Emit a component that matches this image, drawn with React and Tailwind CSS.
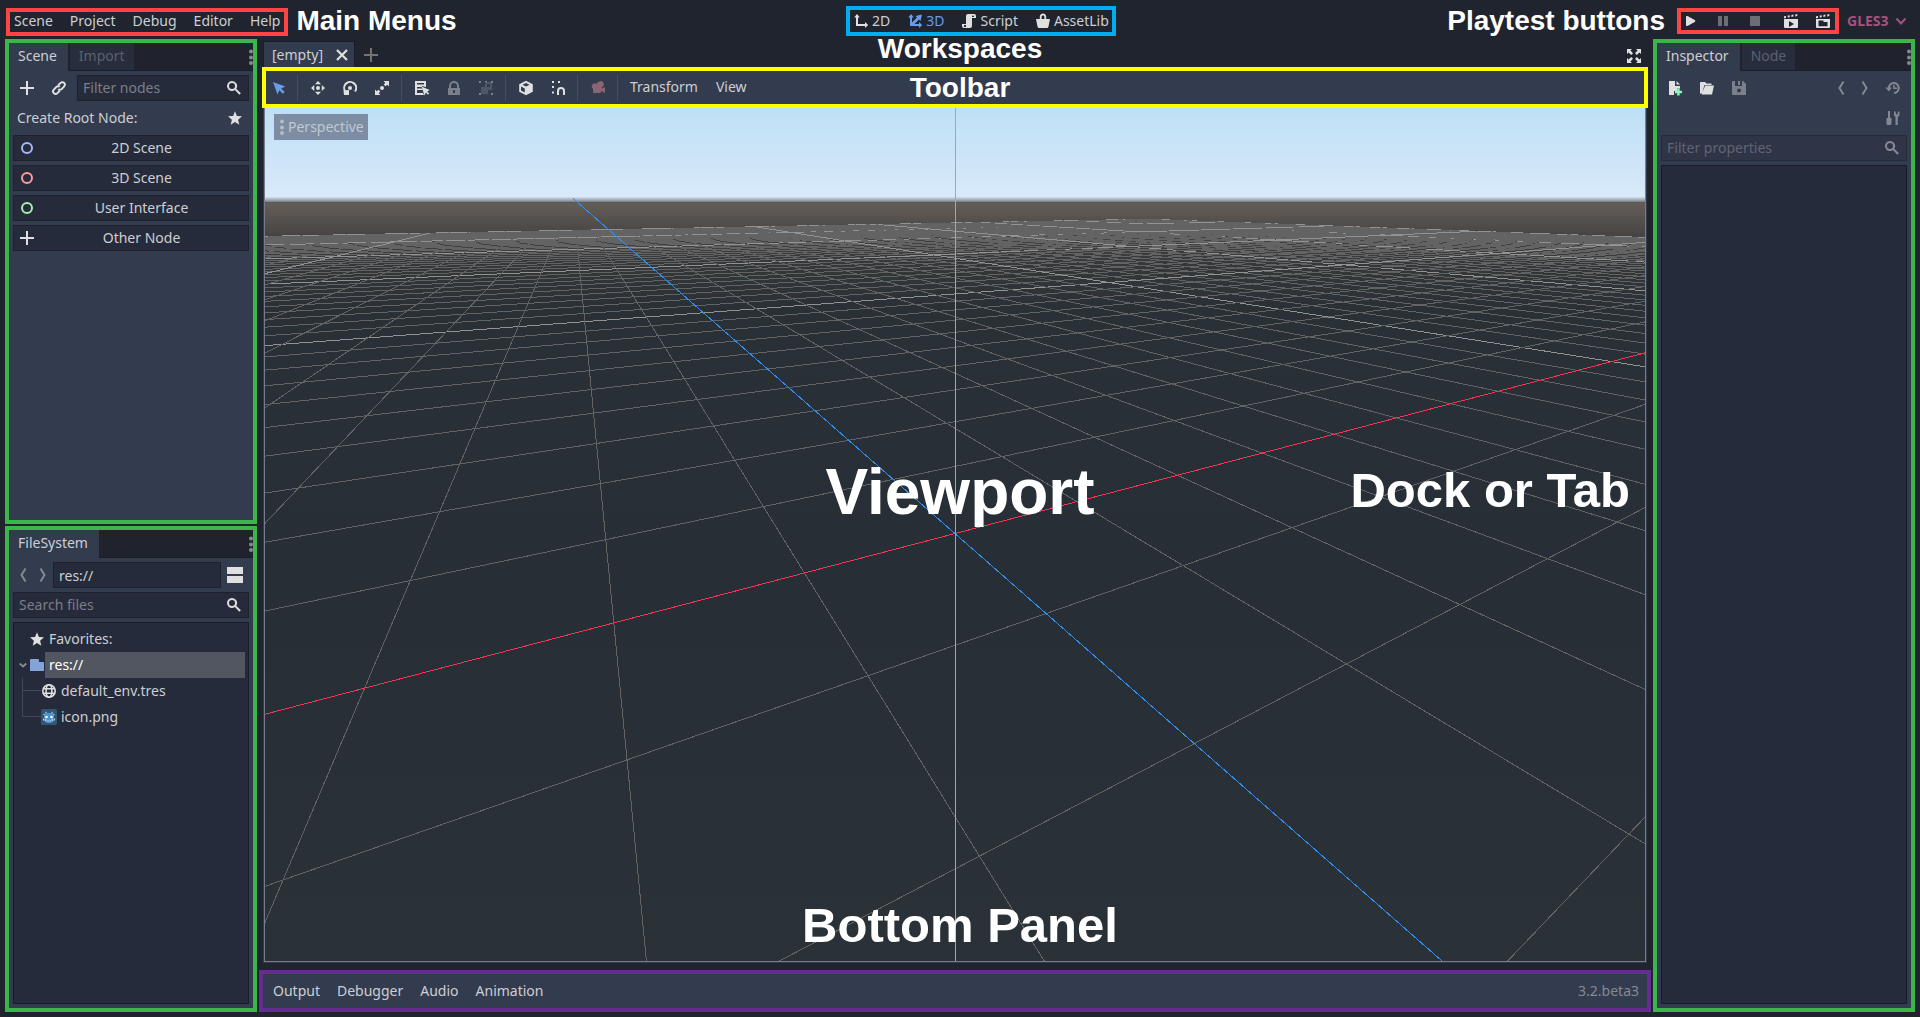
import React from "react";

/* ---------- icons, all on a 16px grid ---------- */

function Icon({ children, className = "text-[#e0e0e0]", label }) {
  return (
    <svg viewBox="0 0 16 16" className={`size-4 shrink-0 ${className}`} fill="currentColor" aria-hidden={label ? undefined : true}>
      {children}
    </svg>
  );
}

const Plus = (p) => (
  <Icon {...p}>
    <path d="M7 1h2v6h6v2H9v6H7V9H1V7h6z" />
  </Icon>
);
const Search = (p) => (
  <Icon {...p}>
    <path d="M6 1a5 5 0 1 0 2.9 9.1l4.400 4.600 1.600-1.500-4.600-4.500A5 5 0 0 0 6 1zm0 2a3 3 0 1 1 0 6 3 3 0 0 1 0-6z" />
  </Icon>
);
const Star = (p) => (
  <Icon {...p}>
    <path d="M8 1.200 9.900 5.900l5.100.4-3.900 3.400 1.200 5L8 12l-4.300 2.700 1.200-5L1 6.300l5.100-.4z" />
  </Icon>
);
const LinkIcon = (p) => (
  <Icon {...p}>
    <g fill="none" stroke="currentColor" strokeWidth="2">
      <path d="M7.200 5.300 9.600 2.900a2.500 2.500 0 0 1 3.600 3.500l-2.600 2.700c-1 1-2.500 1-3.300.1" />
      <path d="M8.800 10.700 6.400 13.100a2.500 2.500 0 0 1-3.600-3.500l2.600-2.700c1-1 2.500-1 3.300-.1" />
    </g>
  </Icon>
);
const Ring = (p) => (
  <Icon {...p}>
    <circle cx="8" cy="8" r="5" fill="none" stroke="currentColor" strokeWidth="2" />
  </Icon>
);
const Dots = (p) => (
  <Icon {...p}>
    <circle cx="8" cy="2.500" r="2" />
    <circle cx="8" cy="8.500" r="2" />
    <circle cx="8" cy="14" r="2" />
  </Icon>
);
const ChevronLeft = (p) => (
  <Icon {...p}>
    <path d="M10.500 1.500 6.500 8l4 6.500" fill="none" stroke="currentColor" strokeWidth="2" />
  </Icon>
);
const ChevronRight = (p) => (
  <Icon {...p}>
    <path d="M5.500 1.500 9.500 8l-4 6.500" fill="none" stroke="currentColor" strokeWidth="2" />
  </Icon>
);
const ChevronDown = (p) => (
  <Icon {...p}>
    <path d="m3.500 5.500 4.500 5 4.500-5" fill="none" stroke="currentColor" strokeWidth="2" />
  </Icon>
);
const FoldArrow = (p) => (
  <Icon {...p}>
    <path d="m4.700 6.500 3.300 3 3.300-3" fill="none" stroke="currentColor" strokeWidth="2" />
  </Icon>
);
const Close = (p) => (
  <Icon {...p}>
    <path d="m3 3 10 10M13 3 3 13" fill="none" stroke="currentColor" strokeWidth="2.200" />
  </Icon>
);
const SplitMode = (p) => (
  <Icon {...p}>
    <path d="M0 0h16v7H0zM0 9h16v7H0z" />
  </Icon>
);
const Folder = (p) => (
  <Icon {...p}>
    <path d="M2 2a1 1 0 0 0-1 1v11h14V6a1 1 0 0 0-1-1h-4V3a1 1 0 0 0-1-1z" />
  </Icon>
);
const Globe = (p) => (
  <Icon {...p}>
    <g fill="none" stroke="currentColor" strokeWidth="1.600">
      <circle cx="8" cy="8" r="6.200" />
      <ellipse cx="8" cy="8" rx="2.900" ry="6.200" />
      <path d="M2 5.800h12M2 10.200h12" strokeWidth="1.400" />
    </g>
  </Icon>
);
const Robot = (p) => (
  <Icon {...p}>
    <rect width="16" height="16" rx="1.500" fill="#35546f" />
    <path d="M3 5.500 4.500 3l2 1h3l2-1L13 5.500V11c0 2-2 3-5 3s-5-1-5-3z" fill="#4a93cc" />
    <path d="M3 5v1M5 2.800v1M11 2.800v1M13 5v1M2.500 9.500v2M13.500 9.500v2" stroke="#b9dcf5" strokeWidth="1" />
    <circle cx="5.500" cy="8" r="1.300" fill="#fff" />
    <circle cx="10.500" cy="8" r="1.300" fill="#fff" />
    <path d="M4 11h1.500M6.500 12h1M8.500 12h1M10.500 11H12" stroke="#fff" strokeWidth="1" />
  </Icon>
);
const Axes2D = (p) => (
  <Icon {...p}>
    <path d="M4 1 1.200 4.500H3V13h9v2l3.200-3L12 9v2H5V4.500h1.800z" />
  </Icon>
);
const Axes3D = (p) => (
  <Icon {...p}>
    <path d="M4 1 1.200 4.500H3V13h9v2l3.200-3L12 9v2H7.400L12 6.400l1.500 1.600L15 1.500 8.500 3l1.600 1.500L5 9.600V4.500h1.800z" />
  </Icon>
);
const Script = (p) => (
  <Icon {...p}>
    <path d="M7 1a2 2 0 0 0-2 2v8H1v2a2 2 0 0 0 2 2h6a2 2 0 0 0 2-2V5h4V3a2 2 0 0 0-2-2zm5 1.500a.9.9 0 0 1 .9.900V4H11v-.600c0-.500.500-.900 1-.900zM3 12h2v1.500a.7.7 0 0 1-.700.500H3.500a.6.6 0 0 1-.500-.500z" />
  </Icon>
);
const Bag = (p) => (
  <Icon {...p}>
    <path d="M8 .500A3.200 3.200 0 0 0 4.800 4v2H1l1.600 8a1.400 1.400 0 0 0 1.400 1h8a1.400 1.400 0 0 0 1.400-1L15 6h-3.800V4A3.200 3.200 0 0 0 8 .500zM8 2.400c.9 0 1.400.7 1.400 1.600v2H6.600V4c0-.9.500-1.600 1.400-1.600z" />
  </Icon>
);
const Play = (p) => (
  <Icon {...p}>
    <path d="M3 4a1 1 0 0 1 1.500-.9l7.200 4a1 1 0 0 1 0 1.800l-7.200 4A1 1 0 0 1 3 12z" />
  </Icon>
);
const Pause = (p) => (
  <Icon {...p}>
    <path d="M3 3h4v10H3zM9 3h4v10H9z" />
  </Icon>
);
const Stop = (p) => (
  <Icon {...p}>
    <rect x="3" y="3" width="10" height="10" rx=".8" />
  </Icon>
);
const Clapper = ({ kind, ...p }) => (
  <Icon {...p}>
    <path d="M1 3.200 3 2.900v2L1 5.200zM4.700 2.600l2-.400v2l-2 .400zM8.400 2l2-.400v2l-2 .400zM12.300 1.400l2-.400v2l-2 .400z" />
    {kind === "play" ? (
      <path fillRule="evenodd" d="M1 6h14v8a1 1 0 0 1-1 1H2a1 1 0 0 1-1-1zm5 2v6l5-3z" />
    ) : (
      <path fillRule="evenodd" d="M1 6h14v8a1 1 0 0 1-1 1H2a1 1 0 0 1-1-1zm2.500 1.500V13.200h9V9h-4V7.500z" />
    )}
  </Icon>
);
const Expand = (p) => (
  <Icon {...p}>
    <path d="M1 1h5L4.400 2.600 7 5.200 5.200 7 2.600 4.400 1 6zM15 1v5l-1.600-1.600L10.800 7 9 5.200l2.600-2.600L10 1zM1 15v-5l1.600 1.600L5.200 9 7 10.800l-2.600 2.600L6 15zM15 15h-5l1.600-1.600L9 10.800 10.800 9l2.600 2.600L15 10z" />
  </Icon>
);
const Cursor = (p) => (
  <Icon {...p}>
    <path d="m2 2 4.500 12.500 1.800-4.200 3.500 3.500 1.900-1.900-3.500-3.500 4.100-1.800z" />
  </Icon>
);
const Move = (p) => (
  <Icon {...p}>
    <circle cx="8" cy="8" r="2" />
    <path d="m8 1 3 3.200H5zM8 15l3-3.200H5zM1 8l3.200-3v6zM15 8l-3.200-3v6z" />
  </Icon>
);
const Rotate = (p) => (
  <Icon {...p}>
    <circle cx="8" cy="8" r="2" />
    <path d="M3.700 12A6 6 0 1 1 13 11.500" fill="none" stroke="currentColor" strokeWidth="2" />
    <path d="M1.500 10.500 7 10v5H2z" />
  </Icon>
);
const Scale = (p) => (
  <Icon {...p}>
    <circle cx="8" cy="8" r="2" />
    <path d="M9.500 1H15v5.500l-1.800-1.800-1.700 1.600-1.800-1.800 1.600-1.700zM6.500 15H1V9.500l1.800 1.800 1.700-1.600 1.800 1.800-1.600 1.700z" />
  </Icon>
);
const ListSelect = (p) => (
  <Icon {...p}>
    <path fillRule="evenodd" d="M1 1h11v6L8 6v1H3v1.500h5.500V10H3v3h6l1 2H1zm2 2v1.500h7V3z" />
    <path d="m7.500 6.500 3 9 1.500-3 2 2.200 1.200-1.200-2-2 2.500-1.500z" />
  </Icon>
);
const Lock = (p) => (
  <Icon {...p}>
    <path fillRule="evenodd" d="M8 1a5 5 0 0 0-5 5v2H2v7h12V8h-1V6a5 5 0 0 0-5-5zm0 2a3 3 0 0 1 3 3v2H5V6a3 3 0 0 1 3-3zM7 10h2v3H7z" />
  </Icon>
);
const Group = (p) => (
  <Icon {...p}>
    <path fillRule="evenodd" d="M7 2h7v8h-4v4H3V7h4zm2 2v3h3V4z" opacity=".4" />
    <path d="M1 1h2v2H1zM13 1h2v2h-2zM1 13h2v2H1zM13 13h2v2h-2zM7 1h2v1H7z" />
  </Icon>
);
const Cube = (p) => (
  <Icon {...p}>
    <path fillRule="evenodd" d="m8 .800 6.800 3.500v7.400L8 15.200l-6.800-3.500V4.300zM8 3 4.500 4.800 8 6.600l3.500-1.800zM3 6.500v4l3.800 2v-4z" />
  </Icon>
);
const Snap = (p) => (
  <Icon {...p}>
    <path d="M2 1h2v2H2zM8 1h2v2H8zM2 6h2v2H2zM2 11.500h2v2H2z" />
    <path d="M8 15v-4a3 3 0 0 1 6 0v4" fill="none" stroke="currentColor" strokeWidth="2" />
  </Icon>
);
const Camera = (p) => (
  <Icon {...p}>
    <path d="M9.500 1.500A3 3 0 0 0 6.600 4 3 3 0 1 0 3 8.800V12a1 1 0 0 0 1 1h6a1 1 0 0 0 1-1v-1l4 2V7l-3 1.500V7a3 3 0 0 0-2.500-5.500z" />
  </Icon>
);
const NewFile = (p) => (
  <Icon {...p}>
    <path d="M2 1h6v5h5v2.500h-3V11H7v4H2zM9.500 1 13 4.600H9.500z" />
    <path d="M10.200 8.600h2.400v2.200H15v2.400h-2.400v2.400h-2.400v-2.400H8v-2.400h2.200z" fill="#84ffb1" />
  </Icon>
);
const OpenFolder = (p) => (
  <Icon {...p}>
    <path d="M1 13V3a1 1 0 0 1 1-1h4l1.500 1.500h5V5H5.500L3 13.500zM6.200 5.500H15L13 14.500H2.500z" />
    <path d="M1.500 13.500V2.500" stroke="currentColor" />
  </Icon>
);
const Save = (p) => (
  <Icon {...p}>
    <path fillRule="evenodd" d="M1 2a1 1 0 0 1 1-1h2v5h7V1h1l3 3v10a1 1 0 0 1-1 1H2a1 1 0 0 1-1-1zm7 6.500a2 2 0 1 0 0 4 2 2 0 0 0 0-4zM7 1h2v4H7z" />
  </Icon>
);
const History = (p) => (
  <Icon {...p}>
    <path d="M3.800 8.500A5 5 0 1 1 9 13" fill="none" stroke="currentColor" strokeWidth="2" />
    <path d="M.500 7.500h6.500L3.800 11.500zM8.200 5h1.600v2.500H12v1.600H8.200z" />
  </Icon>
);
const Tools = (p) => (
  <Icon {...p}>
    <path d="M3 1h2v7h1.500v5.500a1.500 1.500 0 0 1-1.500 1.500H3a1.500 1.500 0 0 1-1.500-1.500V8H3zM9 1v3.500A3 3 0 0 0 10.500 7v8h2.300V7A3 3 0 0 0 14.500 4.500V1l-1.700 1v2.200h-2V2z" />
  </Icon>
);

/* ---------- shared controls ---------- */

function IconButton({ label, className = "w-7", children }) {
  return (
    <button aria-label={label} className={`flex h-[26px] shrink-0 items-center justify-center ${className}`}>
      {children}
    </button>
  );
}

function Tab({ active, children }) {
  return (
    <button
      role="tab"
      aria-selected={!!active}
      className={
        active
          ? "h-7 bg-[#333b4f] pb-0.5 pl-[9px] pr-[11px] text-[#cdcfd2]"
          : "ml-0.5 h-7 border-b border-[#1b1e29] bg-[#282d3d] px-[9px] pb-0.5 text-[#5b606e]"
      }
    >
      {children}
    </button>
  );
}

function Dock({ tabs, children }) {
  return (
    <section className="flex min-h-0 min-w-0 flex-col border-4 border-[#3cb64a] bg-[#333b4f]">
      <div role="tablist" className="flex h-7 shrink-0 overflow-hidden bg-[#20232e]">
        {tabs.map((name, i) => (
          <Tab key={name} active={i === 0}>
            {name}
          </Tab>
        ))}
        <div className="flex flex-1 items-center justify-end border-b border-[#1b1e29]">
          <button aria-label="Dock options" className="-mr-1.5">
            <Dots className="text-[#868890]" />
          </button>
        </div>
      </div>
      <div className="flex min-h-0 flex-1 flex-col gap-1 p-1">{children}</div>
    </section>
  );
}

function SearchField({ label, muted }) {
  return (
    <label
      className={`flex h-[26px] min-w-0 flex-1 items-center border pl-[5px] pr-1.5 ${
        muted ? "border-[#262b3a] bg-[#2f3547]" : "border-[#1f222e] bg-[#262b3b]"
      }`}
    >
      <input
        aria-label={label}
        placeholder={label}
        className={`w-full min-w-0 bg-transparent outline-none ${
          muted ? "placeholder:text-[#5f6474]" : "placeholder:text-[#7b7e89]"
        }`}
      />
      <Search className={muted ? "text-[#888b94]" : "text-[#dcdcde]"} />
    </label>
  );
}

function RootButton({ icon, children }) {
  return (
    <button className="flex h-[26px] items-center border border-[#1f222e] bg-[#262b3b] pl-[5px]">
      {icon}
      <span className="flex-1 text-center">{children}</span>
    </button>
  );
}

/* ---------- 3D viewport ---------- */

const FOCAL = 614;
const EYE = [-1.6829, 1.9177, 3.0806];
const RIGHT = [0.8776, 0, 0.4794];
const UP = [0.2298, 0.8776, -0.4207];
const FORWARD = [0.4207, -0.4794, -0.7702];
const NEAR = 0.1;

const dot = (a, b) => a[0] * b[0] + a[1] * b[1] + a[2] * b[2];

function toCamera(p) {
  const d = [p[0] - EYE[0], p[1] - EYE[1], p[2] - EYE[2]];
  return [dot(d, RIGHT), dot(d, UP), dot(d, FORWARD)];
}

function project(from, to) {
  let a = toCamera(from);
  let b = toCamera(to);
  if (a[2] < NEAR && b[2] < NEAR) return "";
  const cut = (p, q) => {
    const t = (NEAR - p[2]) / (q[2] - p[2]);
    return [p[0] + t * (q[0] - p[0]), p[1] + t * (q[1] - p[1]), NEAR];
  };
  if (a[2] < NEAR) a = cut(a, b);
  if (b[2] < NEAR) b = cut(b, a);
  const s = (p) => `${((FOCAL * p[0]) / p[2]).toFixed(1)} ${((-FOCAL * p[1]) / p[2]).toFixed(1)}`;
  return `M${s(a)}L${s(b)}`;
}

/* Grid lines from the far edge to the near one, every tenth line brighter. */
const SIZE = 50;
const gridLines = [];
for (let i = SIZE; i >= -SIZE; i--) {
  if (i === 0) continue;
  gridLines.push({
    d: project([i, 0, -SIZE], [i, 0, SIZE]) + project([-SIZE, 0, -i], [SIZE, 0, -i]),
    color: i % 10 === 0 ? "#929292" : "#636363",
  });
}
const axisX = project([-4000, 0, 0], [4000, 0, 0]);
const axisZ = project([0, 0, -4000], [0, 0, 4000]);

function Scene3D() {
  return (
    <svg className="block h-full w-full" aria-label="3D grid">
      <defs>
        <linearGradient id="sky" gradientUnits="userSpaceOnUse" x1="0" y1="-430" x2="0" y2="-331">
          <stop offset="0" stopColor="#bcdff4" />
          <stop offset=".3" stopColor="#c6e3f7" />
          <stop offset=".6" stopColor="#cfe4f8" />
          <stop offset=".94" stopColor="#d8eafa" />
          <stop offset="1" stopColor="#75757a" />
        </linearGradient>
        <linearGradient id="ground" gradientUnits="userSpaceOnUse" x1="0" y1="-331" x2="0" y2="430">
          <stop offset="0" stopColor="#655e58" />
          <stop offset=".045" stopColor="#454342" />
          <stop offset=".08" stopColor="#34383a" />
          <stop offset=".14" stopColor="#293036" />
          <stop offset=".5" stopColor="#272e36" />
          <stop offset="1" stopColor="#2a3137" />
        </linearGradient>
      </defs>
      <svg x="50%" y="50%" overflow="visible">
        <g transform="translate(0 -1)">
          <rect x="-4000" y="-2000" width="8000" height="1669" fill="url(#sky)" />
          <rect x="-4000" y="-331" width="8000" height="3000" fill="url(#ground)" />
          <g fill="none" strokeWidth="1" shapeRendering="crispEdges">
            {gridLines.map((line, i) => (
              <path key={i} d={line.d} stroke={line.color} />
            ))}
            <path d={axisX} stroke="#f53352" />
            <path d={axisZ} stroke="#2d8eee" />
            <path d="M.5-2000V2000" stroke="#87d603" />
          </g>
        </g>
      </svg>
    </svg>
  );
}

/* ---------- regions ---------- */

const CALLOUT = "font-['Liberation_Sans',Arial,sans-serif] font-bold leading-none text-white whitespace-nowrap";

function Header() {
  return (
    <header className="flex h-[39px] shrink-0 items-start pl-1.5 pr-[11px]">
      <nav className="mt-2 flex h-7 items-center gap-[17px] border-4 border-[#ff4444] px-1 pb-0.5">
        {["Scene", "Project", "Debug", "Editor", "Help"].map((m) => (
          <button key={m}>{m}</button>
        ))}
      </nav>
      <span className={`ml-2 mt-[7px] text-[28px] ${CALLOUT}`}>Main Menus</span>

      <div className="flex-1" />
      <nav className="ml-[58px] mt-1.5 flex h-[30px] items-center gap-[17px] border-4 border-[#00adf0] px-[3px]">
        {[
          ["2D", Axes2D],
          ["3D", Axes3D],
          ["Script", Script],
          ["AssetLib", Bag],
        ].map(([name, Glyph]) => (
          <button key={name} className={`flex items-center gap-[3px] ${name === "3D" ? "text-[#699ce8]" : ""}`}>
            <Glyph className={name === "3D" ? "text-[#699ce8]" : "text-[#e0e0e0]"} />
            {name}
          </button>
        ))}
      </nav>
      <div className="flex-1" />

      <span className={`mr-3 mt-[7px] text-[28px] ${CALLOUT}`}>Playtest buttons</span>
      <div className="mt-2 flex h-[26px] items-center gap-4 border-4 border-[#ff4444] pl-0.5 pr-1">
        <button aria-label="Play">
          <Play />
        </button>
        <button aria-label="Pause">
          <Pause className="text-[#6c6e75]" />
        </button>
        <button aria-label="Stop">
          <Stop className="text-[#6c6e75]" />
        </button>
        <button aria-label="Play scene" className="ml-1">
          <Clapper kind="play" />
        </button>
        <button aria-label="Play custom scene">
          <Clapper kind="folder" />
        </button>
      </div>
      <div className="mt-2 flex h-[26px] items-center pl-2 text-[#a4527f]">
        <select aria-label="Renderer" className="mr-1 appearance-none bg-transparent font-bold outline-none">
          <option>GLES3</option>
        </select>
        <ChevronDown className="text-[#a4527f]" />
      </div>
    </header>
  );
}

function ScenePanel() {
  return (
    <Dock tabs={["Scene", "Import"]}>
      <div className="flex gap-1">
        <IconButton label="Add node">
          <Plus />
        </IconButton>
        <IconButton label="Instance scene">
          <LinkIcon />
        </IconButton>
        <SearchField label="Filter nodes" />
      </div>
      <div className="flex h-[26px] items-center justify-between pl-1 pr-1.5">
        <span>Create Root Node:</span>
        <button aria-label="Favorite nodes">
          <Star />
        </button>
      </div>
      <RootButton icon={<Ring className="text-[#a5b7f3]" />}>2D Scene</RootButton>
      <RootButton icon={<Ring className="text-[#fc9c9c]" />}>3D Scene</RootButton>
      <RootButton icon={<Ring className="text-[#a5efac]" />}>User Interface</RootButton>
      <RootButton icon={<Plus />}>Other Node</RootButton>
    </Dock>
  );
}

function FilePanel() {
  return (
    <Dock tabs={["FileSystem"]}>
      <div className="flex">
        <IconButton label="Back" className="w-5">
          <ChevronLeft className="text-[#858890]" />
        </IconButton>
        <IconButton label="Forward" className="w-5">
          <ChevronRight className="text-[#858890]" />
        </IconButton>
        <input
          aria-label="Path"
          defaultValue="res://"
          className="h-[26px] min-w-0 flex-1 border border-[#1f222e] bg-[#262b3b] px-[5px] outline-none"
        />
        <IconButton label="Toggle split mode">
          <SplitMode />
        </IconButton>
      </div>
      <div className="flex">
        <SearchField label="Search files" />
      </div>
      <ul className="min-h-0 flex-1 border border-[#1a1d29] bg-[#262b3b] p-[3px]">
        <li className="flex h-[26px] items-center gap-1 pl-3">
          <Star />
          <span>Favorites:</span>
        </li>
        <li>
          <div className="flex h-[26px] items-center">
            <FoldArrow className="-ml-0.5 -mr-0.5 text-[#858890]" />
            <Folder className="text-[#84a3d6]" />
            <span className="flex h-[26px] flex-1 items-center bg-[#525660] pl-1 text-white">res://</span>
          </div>
          <ul className="ml-[5px]">
            {[
              ["default_env.tres", <Globe key="i" />],
              ["icon.png", <Robot key="i" />],
            ].map(([name, icon]) => (
              <li key={name} className="group flex h-[26px] items-center">
                <span className="flex h-full w-[19px] flex-col">
                  <span className="h-[13px] border-b border-l border-[#42475a]" />
                  <span className="flex-1 border-l border-[#42475a] group-last:border-transparent" />
                </span>
                {icon}
                <span className="ml-1">{name}</span>
              </li>
            ))}
          </ul>
        </li>
      </ul>
    </Dock>
  );
}

function Separator() {
  return <span className="ml-px mr-0.5 h-[26px] w-px bg-[#474e61]" />;
}

function Toolbar() {
  return (
    <div role="toolbar" className="relative z-10 mx-[5px] flex h-[41px] shrink-0 items-center gap-1 border-4 border-[#ffff00] bg-[#333b4f]">
      <IconButton label="Select" className="w-[26px]">
        <Cursor className="text-[#699ce8]" />
      </IconButton>
      <Separator />
      <IconButton label="Move"><Move /></IconButton>
      <IconButton label="Rotate"><Rotate /></IconButton>
      <IconButton label="Scale"><Scale /></IconButton>
      <Separator />
      <IconButton label="List select"><ListSelect /></IconButton>
      <IconButton label="Lock"><Lock className="text-[#7c808b]" /></IconButton>
      <IconButton label="Group"><Group className="text-[#7c808b]" /></IconButton>
      <Separator />
      <IconButton label="Local space"><Cube /></IconButton>
      <IconButton label="Snap"><Snap /></IconButton>
      <Separator />
      <IconButton label="Override camera"><Camera className="text-[#8a6470]" /></IconButton>
      <Separator />
      <button className="pb-0.5 pl-1.5 pr-2">Transform</button>
      <button className="px-1.5 pb-0.5">View</button>
    </div>
  );
}

function Center() {
  return (
    <main className="flex min-h-0 min-w-0 flex-1 flex-col">
      <div role="tablist" className="flex h-7 shrink-0 items-end pl-1.5 pr-[11px]">
        <div className="flex h-[26px] items-center gap-[11px] border border-b-0 border-[#1a1d27] bg-[#333b4f] pl-2 pr-1">
          <button role="tab" aria-selected="true">[empty]</button>
          <button aria-label="Close scene">
            <Close />
          </button>
        </div>
        <button aria-label="New scene" className="mb-1 ml-2">
          <Plus className="text-[#75756f]" />
        </button>
        <button aria-label="Distraction free mode" className="mb-[3px] ml-auto">
          <Expand />
        </button>
      </div>
      <Toolbar />
      <div className="relative mx-[6px] min-h-0 flex-1 border border-t-0 border-[#333b4f]">
        <div className="h-full overflow-hidden border border-t-0 border-[#757c8d]">
          <Scene3D />
        </div>
        <button className="absolute left-2.5 top-1.5 flex h-[26px] items-center bg-[#7d8ea4] pr-1 text-[#c0c8d1]">
          <Dots className="-mr-0.5 text-[#b3bdc8]" />
          Perspective
        </button>
      </div>
      <footer className="mx-0.5 mt-[7px] flex h-[42px] shrink-0 items-center gap-[17px] border-4 border-[#652d92] bg-[#333b4f] pl-2.5 pr-2">
        {["Output", "Debugger", "Audio", "Animation"].map((name) => (
          <button key={name}>{name}</button>
        ))}
        <span className="ml-auto text-[#858993]">3.2.beta3</span>
      </footer>
    </main>
  );
}

function InspectorPanel() {
  const dim = "text-[#858890]";
  return (
    <Dock tabs={["Inspector", "Node"]}>
      <div className="flex gap-1">
        <IconButton label="New resource"><NewFile /></IconButton>
        <IconButton label="Open resource"><OpenFolder /></IconButton>
        <IconButton label="Save resource"><Save className="text-[#7c808b]" /></IconButton>
        <div className="flex-1" />
        <IconButton label="Previous" className="w-5"><ChevronLeft className={dim} /></IconButton>
        <IconButton label="Next" className="w-5"><ChevronRight className={dim} /></IconButton>
        <IconButton label="History"><History className={dim} /></IconButton>
      </div>
      <div className="flex justify-end">
        <IconButton label="Object properties"><Tools className={dim} /></IconButton>
      </div>
      <div className="flex">
        <SearchField label="Filter properties" muted />
      </div>
      <div className="min-h-0 flex-1 border border-[#1a1d29] bg-[#262b3b]" />
    </Dock>
  );
}

export default function App() {
  return (
    <div className="relative flex h-screen flex-col overflow-hidden bg-[#20242f] pb-[5px] font-['Noto_Sans',sans-serif] text-[14px] leading-5 text-[#cdcfd2]">
      <Header />
      <div className="flex min-h-0 flex-1 px-[5px]">
        <div className="grid w-[252px] shrink-0 grid-cols-1 grid-rows-[485fr_486fr] gap-0.5">
          <ScenePanel />
          <FilePanel />
        </div>
        <Center />
        <div className="grid w-[262px] shrink-0 grid-cols-1">
          <InspectorPanel />
        </div>
      </div>

      <div className={`pointer-events-none absolute inset-0 z-20 ${CALLOUT}`}>
        <span className="absolute inset-x-0 top-[35px] text-center text-[28px]">Workspaces</span>
        <span className="absolute inset-x-0 top-[74px] text-center text-[28px]">Toolbar</span>
        <span className="absolute inset-x-0 top-[460px] text-center text-[64px]">Viewport</span>
        <span className="absolute right-[290px] top-[466px] text-[49px]">Dock or Tab</span>
        <span className="absolute inset-x-0 bottom-[67px] text-center text-[49px]">Bottom Panel</span>
      </div>
    </div>
  );
}
